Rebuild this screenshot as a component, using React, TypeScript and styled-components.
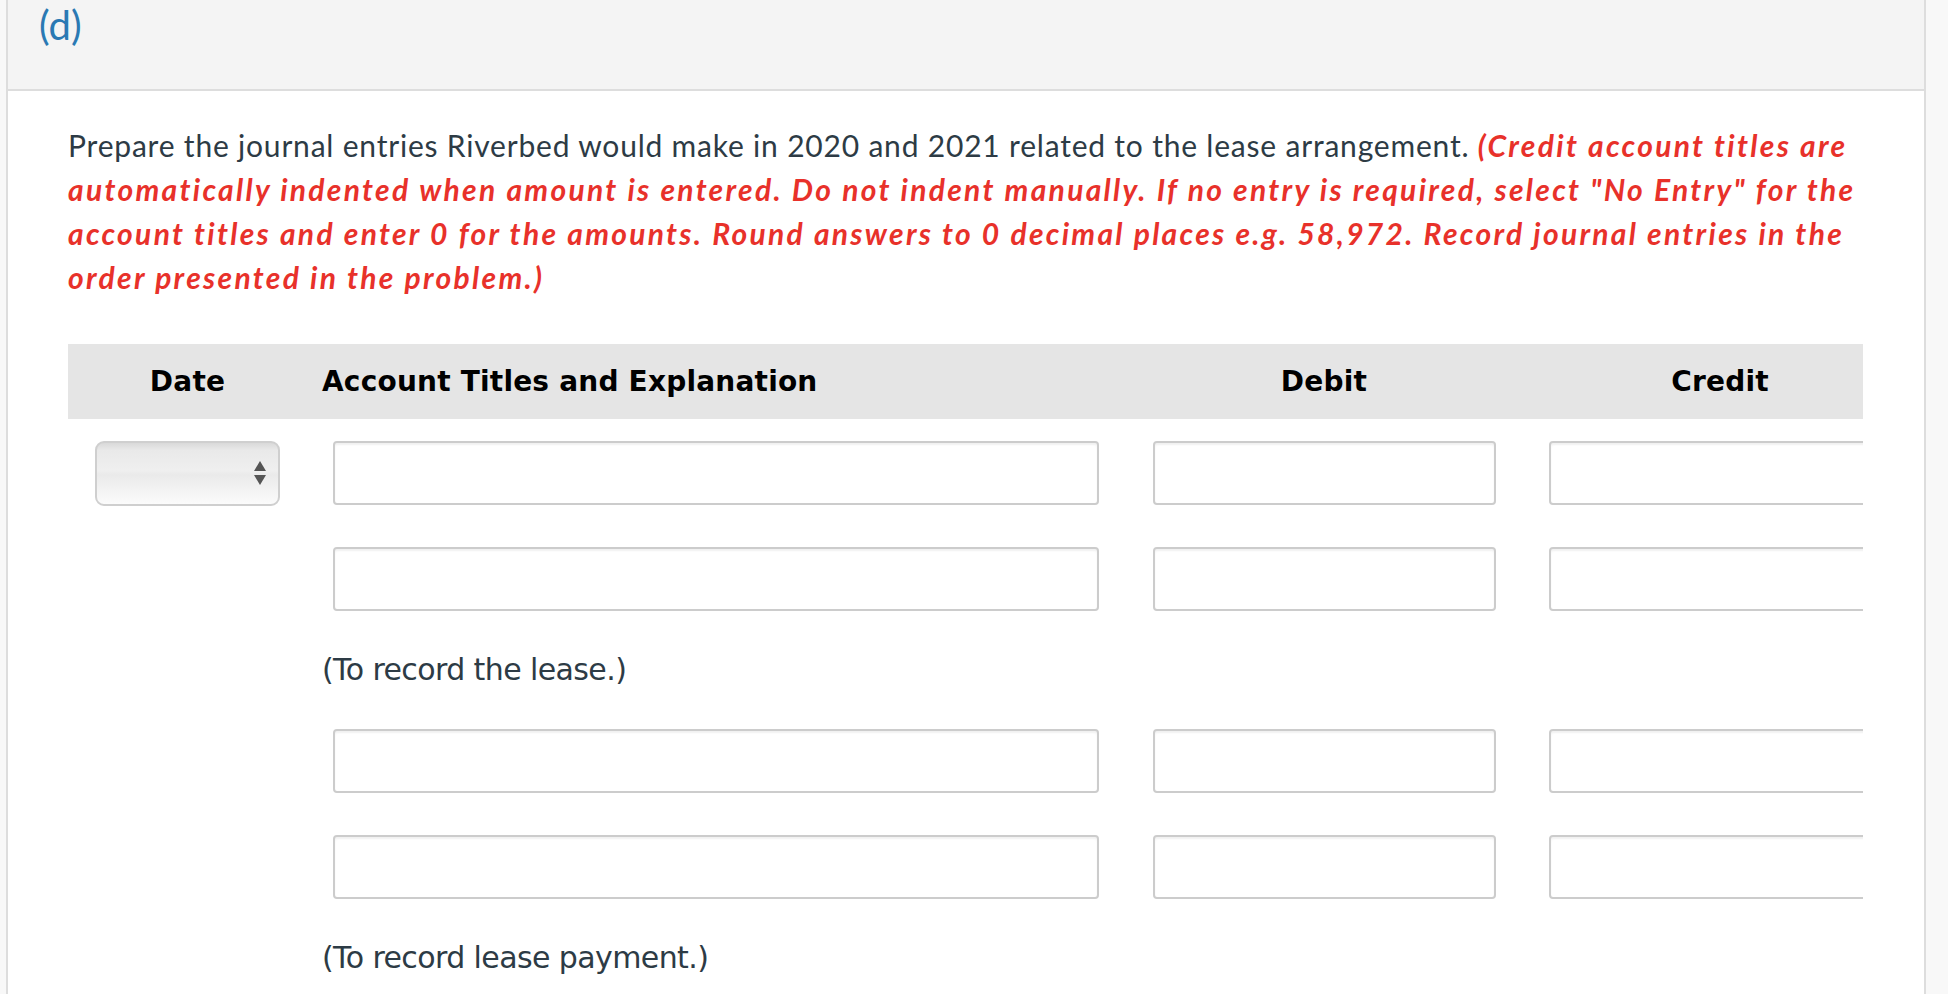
import React from "react";
import styled, { createGlobalStyle } from "styled-components";

const GlobalStyle = createGlobalStyle`
  html, body {
    margin: 0;
    padding: 0;
    background: #f8f8f8;
  }
  body {
    font-family: Lato, "Open Sans", sans-serif;
  }
`;

const Page = styled.div`
  display: flex;
  padding-left: 6px;
  padding-right: 22px;
  min-height: 994px;
`;

const Panel = styled.section`
  flex: 1;
  background: #ffffff;
  border-left: 2px solid #dddddd;
  border-right: 2px solid #dddddd;
  display: flex;
  flex-direction: column;
  overflow: hidden;
  height: 994px;
`;

const PartHeader = styled.header`
  height: 91px;
  flex-shrink: 0;
  box-sizing: border-box;
  background: #f4f4f4;
  border-bottom: 2px solid #dddddd;
  padding: 3px 0 0 31px;
`;

const PartLabel = styled.span`
  font-family: Lato, sans-serif;
  font-size: 40px;
  line-height: 44px;
  color: #2a79b3;
`;

const Body = styled.div`
  padding: 32px 0 0 60px;
`;

const Instructions = styled.p`
  margin: 0;
  width: 1810px;
  font-family: Lato, sans-serif;
  font-size: 30px;
  line-height: 44px;
  letter-spacing: 0.8px;
  color: #2d3b45;
`;

const Emphasis = styled.span`
  color: #e8312a;
  font-style: italic;
  font-weight: 700;
  letter-spacing: 2.3px;
`;

const Table = styled.div`
  margin-top: 45px;
  overflow: hidden;
  width: 1795px;
`;

const Row = styled.div<{ $kind: "head" | "input" | "note" }>`
  display: grid;
  grid-template-columns: 239px 819px 396px 396px;
  width: 1850px;
  align-items: center;
  background: ${(p) => (p.$kind === "head" ? "#e5e5e5" : "transparent")};
  height: ${(p) => (p.$kind === "head" ? "75px" : p.$kind === "input" ? "106px" : "76px")};
  padding-top: ${(p) => (p.$kind === "input" ? "2px" : "0")};
  box-sizing: border-box;
`;

const HeadCell = styled.div<{ $align: "left" | "center" }>`
  font-family: "DejaVu Sans", Verdana, sans-serif;
  font-weight: 700;
  font-size: 28px;
  line-height: 34px;
  letter-spacing: 0.2px;
  color: #000000;
  text-align: ${(p) => p.$align};
  padding-left: ${(p) => (p.$align === "left" ? "15px" : "0")};
`;

const Cell = styled.div<{ $pad?: number }>`
  display: flex;
  justify-content: ${(p) => (p.$pad !== undefined ? "flex-start" : "center")};
  padding-left: ${(p) => (p.$pad !== undefined ? `${p.$pad}px` : "0")};
`;

const TextInput = styled.div<{ $width: number }>`
  width: ${(p) => p.$width}px;
  height: 64px;
  box-sizing: border-box;
  border: 2px solid #cccccc;
  border-radius: 4px;
  background: #ffffff;
  box-shadow: inset 0 2px 2px rgba(0, 0, 0, 0.06);
`;

const Select = styled.div`
  width: 185px;
  height: 65px;
  box-sizing: border-box;
  border: 2px solid #cfcfcf;
  border-radius: 9px;
  background: linear-gradient(
    to bottom,
    #d9d9d9 0%,
    #e9e9e9 12%,
    #efefef 45%,
    #eaeaea 52%,
    #f4f4f4 80%,
    #fbfbfb 100%
  );
  display: flex;
  align-items: center;
  justify-content: flex-end;
  padding-right: 12px;
`;

const Note = styled.div`
  padding-left: 15px;
  padding-top: 2px;
  font-family: "DejaVu Sans", Verdana, sans-serif;
  font-size: 30px;
  line-height: 36px;
  letter-spacing: -0.6px;
  color: #2d3b45;
  white-space: nowrap;
`;

const Arrows = () => (
  <svg width="12" height="25" viewBox="0 0 12 25">
    <polygon points="6,0 12,10 0,10" fill="#555" />
    <polygon points="0,14 12,14 6,24" fill="#555" />
  </svg>
);

const InputRow = ({ withDate }: { withDate?: boolean }) => (
  <Row $kind="input">
    <Cell>
      {withDate ? (
        <Select>
          <Arrows />
        </Select>
      ) : null}
    </Cell>
    <Cell $pad={26}>
      <TextInput $width={766} />
    </Cell>
    <Cell>
      <TextInput $width={343} />
    </Cell>
    <Cell>
      <TextInput $width={343} />
    </Cell>
  </Row>
);

const NoteRow = ({ text }: { text: string }) => (
  <Row $kind="note">
    <div />
    <Note>{text}</Note>
    <div />
    <div />
  </Row>
);

export default function App() {
  return (
    <>
      <GlobalStyle />
      <Page>
        <Panel>
          <PartHeader>
            <PartLabel>(d)</PartLabel>
          </PartHeader>
          <Body>
            <Instructions>
              Prepare the journal entries Riverbed would make in 2020 and 2021 related to the lease arrangement.{" "}
              <Emphasis>
                (Credit account titles are automatically indented when amount is entered. Do not indent manually. If
                no entry is required, select "No Entry" for the account titles and enter 0 for the amounts. Round
                answers to 0 decimal places e.g. 58,972. Record journal entries in the order presented in the problem.)
              </Emphasis>
            </Instructions>
            <Table>
              <Row $kind="head">
                <HeadCell $align="center">Date</HeadCell>
                <HeadCell $align="left">Account Titles and Explanation</HeadCell>
                <HeadCell $align="center">Debit</HeadCell>
                <HeadCell $align="center">Credit</HeadCell>
              </Row>
              <InputRow withDate />
              <InputRow />
              <NoteRow text="(To record the lease.)" />
              <InputRow />
              <InputRow />
              <NoteRow text="(To record lease payment.)" />
            </Table>
          </Body>
        </Panel>
      </Page>
    </>
  );
}
